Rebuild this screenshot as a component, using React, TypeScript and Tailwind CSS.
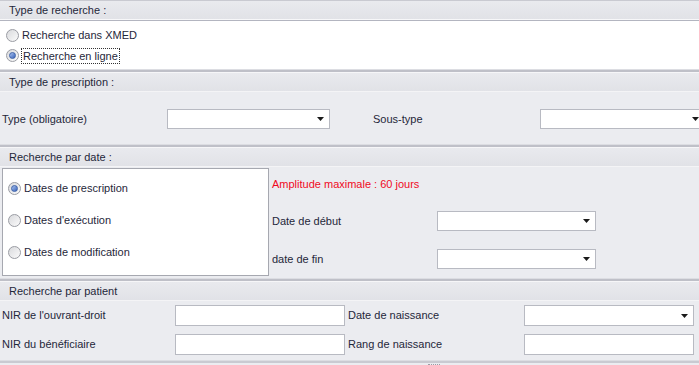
import React from 'react';

const font = { fontFamily: '"Liberation Sans", "DejaVu Sans", sans-serif' };

function Radio({ checked }: { checked?: boolean }) {
  return (
    <span className="relative flex h-[13px] w-[13px] shrink-0 items-center justify-center rounded-full border border-[#9a9ca3] bg-gradient-to-br from-[#d9dadd] to-[#fbfbfb]">
      {checked && (
        <span className="h-[7px] w-[7px] rounded-full border border-[#3d61a8] bg-gradient-to-br from-[#a9c2f0] to-[#3a62b7]" />
      )}
    </span>
  );
}

function Combo({ className }: { className: string }) {
  return (
    <div className={`flex shrink-0 items-center justify-end border border-[#b8bac2] bg-white pr-[5px] ${className}`}>
      <svg width="7" height="4" viewBox="0 0 7 4">
        <path d="M0 0h7L3.5 4z" fill="#1a1a1a" />
      </svg>
    </div>
  );
}

function Field({ className }: { className: string }) {
  return <div className={`shrink-0 border border-[#b8bac2] bg-white ${className}`} />;
}

function Header({ children }: { children: React.ReactNode }) {
  return (
    <div className="flex h-[18px] items-center bg-gradient-to-b from-[#e9eaee] to-[#e1e2e7] pl-[9px] text-[11px] text-[#1f273a]">
      {children}
    </div>
  );
}

function Separator() {
  return (
    <div>
      <div className="h-px bg-[#dcdde2]" />
      <div className="h-[2px] bg-[#bfc0c8]" />
      <div className="h-px bg-[#f6f6f8]" />
    </div>
  );
}

export default function App() {
  return (
    <div className="h-[365px] w-[699px] overflow-hidden bg-[#ebecf0] text-[11px] text-[#1f273a]" style={font}>
      {/* Type de recherche */}
      <div className="h-px bg-[#c9cad1]" />
      <Header>Type de recherche :</Header>
      <div className="h-px bg-[#f7f7f9]" />
      <div className="h-px bg-[#b3b5c0]" />
      <div className="flex h-[48px] flex-col gap-[7px] bg-white pl-[6px] pt-[8px]">
        <div className="flex h-[13px] items-center gap-[2px]">
          <Radio />
          <span className="px-px">Recherche dans XMED</span>
        </div>
        <div className="flex h-[13px] items-center gap-[2px]">
          <Radio checked />
          <span className="border border-dotted border-[#333] px-px leading-[14px]">Recherche en ligne</span>
        </div>
      </div>
      <Separator />

      {/* Type de prescription */}
      <Header>Type de prescription :</Header>
      <div className="h-px bg-[#f4f4f6]" />
      <div className="h-[52px] pt-[17px]">
        <div className="flex h-[20px] items-center">
          <span className="w-[167px] shrink-0 pl-[2px]">Type (obligatoire)</span>
          <Combo className="h-[20px] w-[163px]" />
          <span className="ml-[43px] w-[167px] shrink-0">Sous-type</span>
          <Combo className="h-[20px] w-[165px]" />
        </div>
      </div>
      <Separator />

      {/* Recherche par date */}
      <Header>Recherche par date :</Header>
      <div className="h-px bg-[#f4f4f6]" />
      <div className="flex h-[111px] pt-px">
        <div className="ml-[2px] flex h-[108px] w-[267px] shrink-0 flex-col gap-[19px] border border-[#a6a8b0] bg-white pl-[5px] pt-[13px]">
          <div className="flex h-[13px] items-center gap-[3px]">
            <Radio checked />
            <span>Dates de prescription</span>
          </div>
          <div className="flex h-[13px] items-center gap-[3px]">
            <Radio />
            <span>Dates d'exécution</span>
          </div>
          <div className="flex h-[13px] items-center gap-[3px]">
            <Radio />
            <span>Dates de modification</span>
          </div>
        </div>
        <div className="ml-[3px] flex flex-col pt-[9px]">
          <span className="h-[14px] leading-[14px] text-[#f00a1e]">Amplitude maximale : 60 jours</span>
          <div className="mt-[20px] flex h-[20px] items-center">
            <span className="w-[165px] shrink-0">Date de début</span>
            <Combo className="h-[20px] w-[159px]" />
          </div>
          <div className="mt-[18px] flex h-[20px] items-center">
            <span className="w-[165px] shrink-0">date de fin</span>
            <Combo className="h-[20px] w-[159px]" />
          </div>
        </div>
      </div>
      <Separator />

      {/* Recherche par patient */}
      <Header>Recherche par patient</Header>
      <div className="h-px bg-[#f4f4f6]" />
      <div className="flex h-[59px] flex-col gap-[8px] pt-[4px]">
        <div className="flex h-[21px] items-center">
          <span className="w-[175px] shrink-0 pl-[2px]">NIR de l'ouvrant-droit</span>
          <Field className="h-[21px] w-[170px]" />
          <span className="w-[179px] shrink-0 pl-[3px]">Date de naissance</span>
          <Combo className="h-[21px] w-[170px]" />
        </div>
        <div className="flex h-[21px] items-center">
          <span className="w-[175px] shrink-0 pl-[2px]">NIR du bénéficiaire</span>
          <Field className="h-[21px] w-[170px]" />
          <span className="w-[179px] shrink-0 pl-[3px]">Rang de naissance</span>
          <Field className="h-[21px] w-[170px]" />
        </div>
      </div>
      <div className="h-px bg-[#dcdde2]" />
      <div className="h-[2px] bg-[#c9cad1]" />
      <div className="flex pt-px">
        <span className="ml-[428px] h-px w-[12px] border-t border-dotted border-[#9a9ca5]" />
      </div>
    </div>
  );
}
